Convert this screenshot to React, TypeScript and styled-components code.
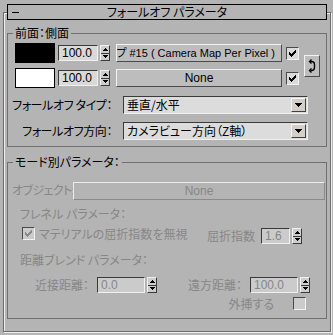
import styled, { createGlobalStyle } from "styled-components";

const BG = "#b4b4b4";
const DIM = "#878787";
const JP = `"Noto Sans CJK JP", sans-serif`;

const GlobalStyle = createGlobalStyle`
  html, body {
    margin: 0;
    padding: 0;
    background: ${BG};
  }
  body {
    font-family: "Liberation Sans", "Noto Sans CJK JP", sans-serif;
    font-size: 12px;
    line-height: 14px;
    color: #000;
    font-feature-settings: "palt";
  }
`;

const Page = styled.div`
  width: 333px;
  height: 335px;
  box-sizing: border-box;
  padding: 12px 0 0 3px;
  overflow: hidden;
`;

const Rollout = styled.div`
  width: 328px;
  height: 320px;
  box-sizing: border-box;
  padding: 0 3px;
  border: 1px solid #6c6c6c;
  box-shadow: inset 1px 1px 0 #efefef, 1px 1px 0 #efefef;
`;

const TitleBar = styled.div`
  display: grid;
  grid-template-columns: 1fr auto 1fr;
  align-items: center;
  height: 16px;
  box-sizing: border-box;
  margin-top: -9px;
  border: 1px solid #000;
  background: ${BG};
`;

const Collapse = styled.span`
  justify-self: start;
  width: 7px;
  height: 1px;
  margin-left: 4px;
  background: #000;
`;

const TitleText = styled.span`
  font-family: ${JP};
  white-space: nowrap;
`;

const Group = styled.fieldset<{ $top: number }>`
  margin: ${(p) => p.$top}px 0 0;
  padding: 0;
  min-width: 0;
  border: 1px solid #707070;
`;

const Legend = styled.legend`
  margin-left: 5px;
  padding: 0 2px;
  font-family: ${JP};
  line-height: 14px;
`;

const MapBody = styled.div`
  display: flex;
  flex-direction: column;
  padding: 3px 0 6px;
`;

const MapTop = styled.div`
  display: flex;
  align-items: center;
  padding-left: 7px;
`;

const MapRows = styled.div`
  display: flex;
  flex-direction: column;
  gap: 5px;
`;

const MapRow = styled.div`
  display: flex;
  align-items: center;
  height: 20px;
`;

const Swatch = styled.div<{ $color: string }>`
  width: 40px;
  height: 20px;
  box-sizing: border-box;
  margin-right: 3px;
  border: 1px solid #000;
  background: ${(p) => p.$color};
`;

const SpinWrap = styled.div<{ $gap?: number }>`
  display: flex;
  align-items: center;
  gap: 2px;
  margin-right: ${(p) => p.$gap ?? 0}px;
`;

const Field = styled.div<{ $w: number; $off?: boolean }>`
  width: ${(p) => p.$w}px;
  height: 16px;
  box-sizing: border-box;
  padding-left: 3px;
  border: 1px solid;
  border-color: #3a3a3a #f0f0f0 #f0f0f0 #3a3a3a;
  background: ${(p) => (p.$off ? "#cbcbcb" : "#d9d9d9")};
  color: ${(p) => (p.$off ? DIM : "#000")};
  font-family: "Liberation Sans", sans-serif;
  line-height: 14px;
`;

const ArrowBox = styled.div`
  display: flex;
  flex-direction: column;
  width: 10px;
  height: 16px;
  box-sizing: border-box;
  border: 1px solid;
  border-color: #f0f0f0 #3a3a3a #3a3a3a #f0f0f0;
  background: #cdcdcd;
`;

const ArrowHalf = styled.div<{ $down?: boolean }>`
  flex: 1;
  display: flex;
  align-items: center;
  justify-content: center;
  border-bottom: ${(p) => (p.$down ? "none" : "1px solid #3a3a3a")};
`;

function Spinner({ value, width, off, gap }: { value: string; width: number; off?: boolean; gap?: number }) {
  return (
    <SpinWrap $gap={gap}>
      <Field $w={width} $off={off}>
        {value}
      </Field>
      <ArrowBox>
        <ArrowHalf>
          <svg width="5" height="3" shapeRendering="crispEdges">
            <path d="M2 0h1v1h1v1h1v1H0V2h1V1h1z" fill="#000" />
          </svg>
        </ArrowHalf>
        <ArrowHalf $down>
          <svg width="5" height="3" shapeRendering="crispEdges">
            <path d="M0 0h5v1H4v1H3v1H2V2H1V1H0z" fill="#000" />
          </svg>
        </ArrowHalf>
      </ArrowBox>
    </SpinWrap>
  );
}

const Button = styled.div<{ $w?: number; $end?: boolean; $off?: boolean }>`
  display: flex;
  align-items: center;
  justify-content: ${(p) => (p.$end ? "flex-end" : "center")};
  ${(p) => (p.$w ? `width: ${p.$w}px;` : "flex: 1;")}
  flex-shrink: 0;
  height: 18px;
  box-sizing: border-box;
  padding-right: ${(p) => (p.$end ? 6 : 0)}px;
  overflow: hidden;
  white-space: nowrap;
  border: 1px solid;
  border-color: ${(p) => (p.$off ? "#ececec #8a8a8a #8a8a8a #ececec" : "#f2f2f2 #4a4a4a #4a4a4a #f2f2f2")};
  background: ${(p) => (p.$off ? BG : "#bdbdbd")};
  color: ${(p) => (p.$off ? DIM : "#000")};
  font-size: ${(p) => (p.$end ? 11 : 12)}px;
`;

const MapButton = styled(Button)`
  margin-right: 4px;
`;

const CheckBox = styled.div<{ $off?: boolean }>`
  display: flex;
  align-items: center;
  justify-content: center;
  flex: none;
  width: 13px;
  height: 13px;
  box-sizing: border-box;
  border: 1px solid;
  border-color: #4a4a4a #f2f2f2 #f2f2f2 #4a4a4a;
  background: ${(p) => (p.$off ? "#cbcbcb" : "#dadada")};
`;

function Check({ on, off }: { on?: boolean; off?: boolean }) {
  return (
    <CheckBox $off={off}>
      {on && (
        <svg width="7" height="7" shapeRendering="crispEdges">
          <path
            d="M6 0h1v1H6z M5 1h2v1H5z M0 2h1v1H0z M4 2h3v1H4z M0 3h2v1H0z M3 3h3v1H3z M0 4h5v1H0z M1 5h3v1H1z M2 6h1v1H2z"
            fill={off ? "#8a8a8a" : "#000"}
          />
        </svg>
      )}
    </CheckBox>
  );
}

const SwapButton = styled.div`
  display: flex;
  align-items: center;
  justify-content: center;
  width: 16px;
  height: 22px;
  box-sizing: border-box;
  margin-left: 5px;
  border: 1px solid;
  border-color: #f2f2f2 #4a4a4a #4a4a4a #f2f2f2;
  background: #bdbdbd;
`;

const DropRow = styled.div`
  display: flex;
  align-items: center;
  height: 18px;
  margin-top: 8px;
`;

const DropLabel = styled.span`
  width: 115px;
  box-sizing: border-box;
  padding-right: 11px;
  text-align: right;
  font-family: ${JP};
  letter-spacing: -0.4px;
  white-space: nowrap;
`;

const Select = styled.div`
  display: flex;
  align-items: center;
  width: 185px;
  height: 18px;
  box-sizing: border-box;
  padding: 0 1px 0 3px;
  border: 1px solid;
  border-color: #3a3a3a #f0f0f0 #f0f0f0 #3a3a3a;
  background: #dcdcdc;
`;

const SelectValue = styled.span`
  flex: 1;
  font-family: ${JP};
  white-space: nowrap;
`;

const SelectArrow = styled.div`
  display: flex;
  align-items: center;
  justify-content: center;
  width: 15px;
  height: 14px;
  box-sizing: border-box;
  border: 1px solid;
  border-color: #f4f4f4 #404040 #404040 #f4f4f4;
  background: #d4d0c8;
`;

function Dropdown({ label, value }: { label: string; value: string }) {
  return (
    <DropRow>
      <DropLabel>{label}</DropLabel>
      <Select>
        <SelectValue>{value}</SelectValue>
        <SelectArrow>
          <svg width="7" height="4" shapeRendering="crispEdges">
            <path d="M0 0h7v1H6v1H5v1H4v1H3V3H2V2H1V1H0z" fill="#000" />
          </svg>
        </SelectArrow>
      </Select>
    </DropRow>
  );
}

const ModeBody = styled.div`
  display: flex;
  flex-direction: column;
  padding: 13px 1px 8px 0;
`;

const ObjectRow = styled.div`
  display: flex;
  align-items: center;
  height: 18px;
  padding-left: 4px;
`;

const Label = styled.span<{ $off?: boolean; $w?: number }>`
  ${(p) => (p.$w ? `width: ${p.$w}px; text-align: right; padding-right: 8px; box-sizing: border-box;` : "")}
  flex: none;
  font-family: ${JP};
  color: ${(p) => (p.$off ? DIM : "#000")};
  white-space: nowrap;
`;

const ObjectLabel = styled(Label)`
  width: 61px;
  font-family: "Liberation Sans", "Noto Sans CJK JP", sans-serif;
  letter-spacing: -0.6px;
`;

const SubHeading = styled.div<{ $top: number }>`
  margin-top: ${(p) => p.$top}px;
  padding-left: 12px;
  font-family: ${JP};
  color: ${DIM};
  white-space: nowrap;
`;

const FresnelRow = styled.div`
  display: flex;
  align-items: flex-start;
  margin-top: 6px;
  padding: 0 23px 0 14px;
`;

const CheckLine = styled.div`
  display: flex;
  align-items: center;
  gap: 4px;
  height: 13px;
`;

const IorBox = styled.div`
  display: flex;
  align-items: center;
  gap: 6px;
  margin: 1px 0 0 auto;
`;

const DistanceRow = styled.div`
  display: flex;
  align-items: center;
  height: 16px;
  margin-top: 10px;
`;

const ExtrapolateRow = styled.div`
  display: flex;
  align-items: center;
  justify-content: flex-end;
  gap: 19px;
  height: 13px;
  margin-top: 4px;
  padding-right: 19px;
`;

const SwapIcon = () => (
  <svg width="8" height="14" viewBox="0 0 8 14" fill="none" stroke="#000" strokeWidth="1.4">
    <path d="M2 2.5 H3.5 Q6.5 2.5 6.5 5.5 V8.5 Q6.5 11.5 3.5 11.5 H1.5" />
    <path d="M3.5 0.5 L1.5 2.5 L3.5 4.5" />
    <path d="M3.5 9.5 L1.5 11.5 L3.5 13.5" />
  </svg>
);

export default function App() {
  return (
    <>
      <GlobalStyle />
      <Page>
        <Rollout>
          <TitleBar>
            <Collapse />
            <TitleText>フォールオフ パラメータ</TitleText>
            <span />
          </TitleBar>

          <Group $top={6}>
            <Legend>前面：側面</Legend>
            <MapBody>
              <MapTop>
                <MapRows>
                  <MapRow>
                    <Swatch $color="#000" />
                    <Spinner value="100.0" width={40} gap={6} />
                    <MapButton $w={166} $end>
                      マップ #15 ( Camera Map Per Pixel )
                    </MapButton>
                    <Check on />
                  </MapRow>
                  <MapRow>
                    <Swatch $color="#fff" />
                    <Spinner value="100.0" width={40} gap={6} />
                    <MapButton $w={166}>None</MapButton>
                    <Check on />
                  </MapRow>
                </MapRows>
                <SwapButton>
                  <SwapIcon />
                </SwapButton>
              </MapTop>
              <Dropdown label="フォールオフ タイプ：" value="垂直/水平" />
              <Dropdown label="フォールオフ方向：" value="カメラビュー方向（Z軸）" />
            </MapBody>
          </Group>

          <Group $top={8}>
            <Legend>モード別パラメータ：</Legend>
            <ModeBody>
              <ObjectRow>
                <ObjectLabel $off>オブジェクト:</ObjectLabel>
                <Button $off>None</Button>
              </ObjectRow>

              <SubHeading $top={7}>フレネル パラメータ：</SubHeading>
              <FresnelRow>
                <CheckLine>
                  <Check on off />
                  <Label $off>マテリアルの屈折指数を無視</Label>
                </CheckLine>
                <IorBox>
                  <Label $off>屈折指数</Label>
                  <Spinner value="1.6" width={29} off />
                </IorBox>
              </FresnelRow>

              <SubHeading $top={9}>距離ブレンド パラメータ：</SubHeading>
              <DistanceRow>
                <Label $off $w={89}>近接距離：</Label>
                <Spinner value="0.0" width={48} off gap={3} />
                <Label $off $w={90}>遠方距離：</Label>
                <Spinner value="100.0" width={48} off />
              </DistanceRow>
              <ExtrapolateRow>
                <Label $off>外挿する</Label>
                <Check off />
              </ExtrapolateRow>
            </ModeBody>
          </Group>
        </Rollout>
      </Page>
    </>
  );
}
